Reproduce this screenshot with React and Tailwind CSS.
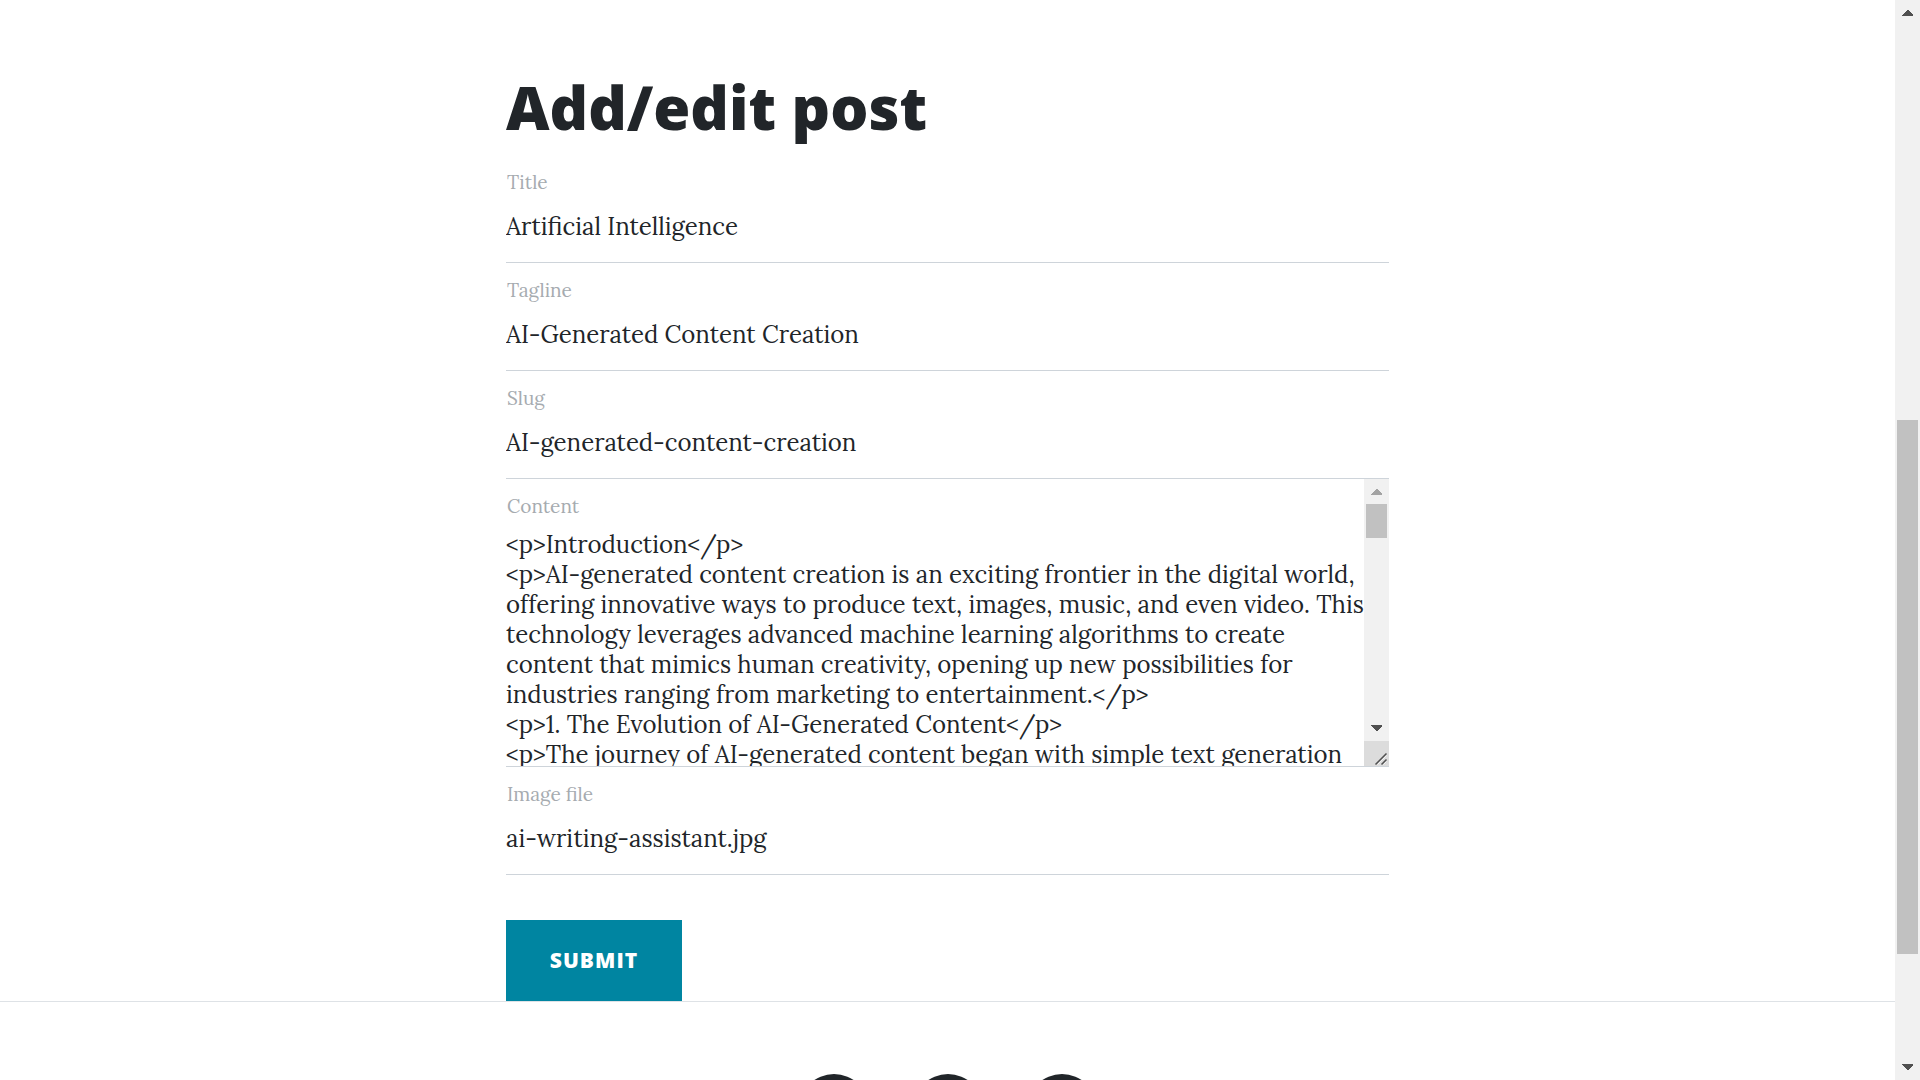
const fields = [
  { id: "title", label: "Title", value: "Artificial Intelligence" },
  { id: "tagline", label: "Tagline", value: "AI-Generated Content Creation" },
  { id: "slug", label: "Slug", value: "AI-generated-content-creation" },
];

const content = [
  "<p>Introduction</p>",
  "<p>AI-generated content creation is an exciting frontier in the digital world,",
  "offering innovative ways to produce text, images, music, and even video. This",
  "technology leverages advanced machine learning algorithms to create",
  "content that mimics human creativity, opening up new possibilities for",
  "industries ranging from marketing to entertainment.</p>",
  "<p>1. The Evolution of AI-Generated Content</p>",
  "<p>The journey of AI-generated content began with simple text generation",
].join("\n");

function Arrow({ down = false, className }) {
  return (
    <svg viewBox="0 0 11 6" className={`h-[6px] w-[11px] ${className}`} fill="currentColor" shapeRendering="crispEdges" aria-hidden="true">
      <path d={down ? "M0 0H11V1L6 6H5L0 1Z" : "M0 6H11V5L6 0H5L0 5Z"} />
    </svg>
  );
}

function TextField({ id, label, value }) {
  return (
    <div className="border-b border-[#ced4da] pt-[15px] pb-[19px]">
      <label htmlFor={id} className="block pl-px text-[19px] leading-6 text-[#a6abb0]">
        {label}
      </label>
      <input id={id} type="text" defaultValue={value} className="mt-[17px] block h-8 w-full bg-transparent text-2xl leading-8 outline-none" />
    </div>
  );
}

export default function App() {
  return (
    <div className="flex h-screen overflow-hidden bg-white font-['Lora','Liberation_Serif',serif] text-[#212529]">
      <div className="min-w-0 flex-1 overflow-hidden">
        <main className="mx-auto w-full max-w-[883px] pt-[71px]">
          <h1 className="mb-[11px] font-['Open_Sans',sans-serif] text-[60px] leading-[73px] font-extrabold">Add/edit post</h1>
          <form onSubmit={(e) => e.preventDefault()}>
            {fields.map((f) => (
              <TextField key={f.id} {...f} />
            ))}
            <div className="flex h-[288px] border-b border-[#ced4da]">
              <div className="flex min-w-0 flex-1 flex-col pt-[15px]">
                <label htmlFor="content" className="block pl-px text-[19px] leading-6 text-[#a6abb0]">
                  Content
                </label>
                <textarea
                  id="content"
                  wrap="off"
                  defaultValue={content}
                  className="mt-3 block min-h-0 w-full flex-1 resize-none overflow-hidden bg-transparent text-2xl leading-[30px] whitespace-pre outline-none"
                />
              </div>
              <div className="flex w-[25px] shrink-0 flex-col items-center bg-[#f1f1f1]">
                <Arrow className="mt-[10px] text-[#a3a3a3]" />
                <div className="mt-[9px] h-[34px] w-[21px] bg-[#c1c1c1]" />
                <Arrow down className="mt-auto mb-[10px] text-[#505050]" />
                <svg viewBox="0 0 25 25" className="h-[25px] w-[25px] bg-[#dcdcdc]" aria-hidden="true">
                  <path d="M11.500 23.500L22.500 12.500M17.500 23.500L22.500 18.500" stroke="#505050" strokeWidth="1.500" />
                  <path d="M13.500 23.500L22.500 14.500M19.500 23.500L22.500 20.500" stroke="#f5f5f5" strokeWidth="1" />
                </svg>
              </div>
            </div>
            <TextField id="image" label="Image file" value="ai-writing-assistant.jpg" />
            <button
              type="submit"
              className="mt-[45px] block h-[81px] w-44 bg-[#0085a1] font-['Open_Sans',sans-serif] text-[21px] font-extrabold tracking-wider text-white uppercase"
            >
              Submit
            </button>
          </form>
        </main>
        <footer className="border-t border-[#dee2e6] pt-[72px]">
          <div className="flex justify-center gap-11">
            {["Twitter", "Facebook", "GitHub"].map((name) => (
              <a key={name} href="#" aria-label={name} className="size-[70px] rounded-full bg-[#212529]" />
            ))}
          </div>
        </footer>
      </div>
      <div className="flex w-[25px] shrink-0 flex-col items-center bg-[#f1f1f1]">
        <Arrow className="mt-[10px] text-[#505050]" />
        <div className="flex min-h-0 w-full flex-1 flex-col items-center">
          <div className="flex-[404]" />
          <div className="w-[21px] flex-[534] bg-[#c1c1c1]" />
          <div className="flex-[110]" />
        </div>
        <Arrow down className="mb-[10px] text-[#505050]" />
      </div>
    </div>
  );
}
